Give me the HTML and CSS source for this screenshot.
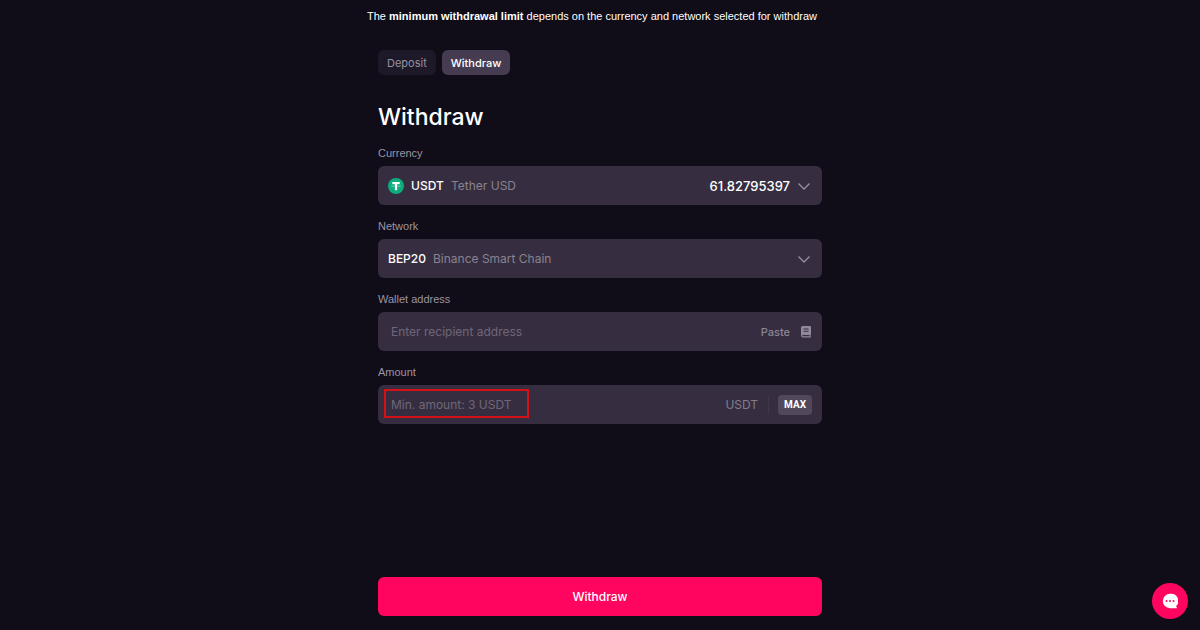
FILE: index.html
```html
<!DOCTYPE html>
<html lang="en">
<head>
  <meta charset="UTF-8" />
  <meta name="viewport" content="width=device-width, initial-scale=1.0"/>
  <title>Withdraw</title>
  <link rel="stylesheet" href="styles.css">
</head>
<body>
  <p class="note">The <strong>minimum withdrawal limit</strong> depends on the currency and network selected for withdraw</p>

  <main class="wallet">
    <div class="tabs">
      <button type="button" class="tab">Deposit</button>
      <button type="button" class="tab active">Withdraw</button>
    </div>

    <h1>Withdraw</h1>

    <form class="form">
      <label class="label" for="currency">Currency</label>
      <div class="field">
        <svg class="coin" viewBox="0 0 16 16" aria-hidden="true">
          <circle cx="8" cy="8" r="8" fill="#0cac7d"/>
          <path d="M4.300 4h7.400v2H9.100v6.300H6.900V6H4.300z" fill="#fff"/>
          <ellipse cx="8" cy="7.800" rx="4.600" ry="1" fill="none" stroke="#fff" stroke-width=".5" opacity=".6"/>
        </svg>
        <select id="currency" class="select">
          <option>USDT</option>
        </select>
        <span class="hint">Tether USD</span>
        <span class="balance">61.82795397</span>
        <svg class="chevron" viewBox="0 0 14 14" aria-hidden="true"><path d="M1.500 4.500 7 10l5.500-5.500"/></svg>
      </div>

      <label class="label" for="network">Network</label>
      <div class="field">
        <select id="network" class="select">
          <option>BEP20</option>
        </select>
        <span class="hint">Binance Smart Chain</span>
        <svg class="chevron last" viewBox="0 0 14 14" aria-hidden="true"><path d="M1.500 4.500 7 10l5.500-5.500"/></svg>
      </div>

      <label class="label" for="address">Wallet address</label>
      <div class="field">
        <input type="text" id="address" class="input" placeholder="Enter recipient address" />
        <button type="button" class="paste">Paste</button>
        <button type="button" class="book" aria-label="Address book">
          <svg viewBox="0 0 12 12" aria-hidden="true">
            <path fill-rule="evenodd" d="M2.500 0H10q1 0 1 1V8q0 .6-.4.9v1.300q.4.100.4.600t-.6.600H2.800Q1 11.400 1 9.600V1.500Q1 0 2.500 0zM3.500 2.500v1h5v-1zM3.500 4.700v1h5v-1zM2.900 9q-.7 0-.7.600t.7.600h6.500V9z"/>
          </svg>
        </button>
      </div>

      <label class="label" for="amount">Amount</label>
      <div class="field">
        <input type="text" id="amount" class="input" placeholder="Min. amount: 3 USDT" />
        <span class="unit">USDT</span>
        <button type="button" class="max">MAX</button>
        <span class="highlight"></span>
      </div>

      <button type="button" class="submit">Withdraw</button>
    </form>
  </main>

  <button type="button" class="chat" aria-label="Chat">
    <svg viewBox="0 0 16 16" aria-hidden="true">
      <path d="M8 .800a7.200 7.200 0 1 0 0 14.400h6.800q.6 0 .2-.5l-1-1.500A7.200 7.200 0 0 0 8 .800z" fill="#fff"/>
      <circle cx="4.500" cy="8" r="1" fill="#ff0560"/>
      <circle cx="8" cy="8" r="1" fill="#ff0560"/>
      <circle cx="11.500" cy="8" r="1" fill="#ff0560"/>
    </svg>
  </button>
</body>
</html>
```

FILE: styles.css
```css
* {
  box-sizing: border-box;
}
body {
  margin: 0;
  min-height: 100vh;
  display: flex;
  flex-direction: column;
  background: #100c18;
  color: #fff;
  font-family: Inter, "Liberation Sans", sans-serif;
  font-size: 12px;
}
button, input, select {
  font: inherit;
  color: inherit;
  border: 0;
  padding: 0;
  background: none;
}
button {
  cursor: pointer;
}
.note {
  margin: 0;
  padding: 8px 16px 0 0;
  font-family: "Liberation Sans", Arial, sans-serif;
  font-size: 11px;
  line-height: 16px;
  text-align: center;
}
.wallet {
  flex: 1;
  display: flex;
  flex-direction: column;
  width: 100%;
  max-width: 444px;
  margin: 0 auto;
  padding: 26px 0 14px;
}
.tabs {
  display: flex;
  gap: 6px;
}
.tab {
  height: 25px;
  padding: 0 9px;
  border-radius: 6px;
  background: #1e1928;
  color: #9791a1;
  font-size: 11px;
}
.tab.active {
  background: #463c52;
  color: #fff;
  font-weight: 500;
}
h1 {
  margin: 27px 0 14px;
  font-size: 23px;
  line-height: 30px;
  font-weight: 500;
}
.form {
  flex: 1;
  display: flex;
  flex-direction: column;
}
.label {
  margin-bottom: 5px;
  color: #9a95a3;
  font-family: "Liberation Sans", Arial, sans-serif;
  font-size: 11px;
  line-height: 15px;
}
.field {
  position: relative;
  display: flex;
  align-items: center;
  height: 39px;
  margin-bottom: 14px;
  padding: 0 10px;
  border-radius: 6px;
  background: #362e40;
}
.coin {
  width: 16px;
  height: 16px;
  margin-right: 7px;
}
.select {
  appearance: none;
  font-weight: 500;
}
.select option {
  background: #362e40;
}
.hint {
  margin-left: 7px;
  color: #89828f;
}
.balance {
  margin-left: auto;
  font-size: 13px;
  font-weight: 500;
}
.chevron {
  width: 14px;
  height: 14px;
  margin: 0 1px 0 7px;
  fill: none;
  stroke: #9891a0;
  stroke-width: 1.3;
}
.chevron.last {
  margin-left: auto;
}
.input {
  flex: 1;
  min-width: 0;
  height: 100%;
  padding-left: 3px;
  outline: 0;
}
.input::placeholder {
  color: #6f6779;
  opacity: 1;
}
.paste {
  color: #8c8594;
  font-size: 11px;
  font-weight: 500;
}
.book {
  width: 12px;
  height: 12px;
  margin-left: 10px;
  fill: #91899a;
}
.book svg, .chat svg {
  display: block;
  width: 100%;
}
.unit {
  padding-right: 10px;
  border-right: 1px solid #40384a;
  color: #837c8a;
  line-height: 18px;
}
.max {
  height: 20px;
  margin-left: 9px;
  padding: 0 6px;
  border-radius: 4px;
  background: #51485b;
  font-family: Roboto, "Liberation Sans", sans-serif;
  font-size: 10px;
  font-weight: 700;
}
/* red frame around the minimum amount */
.highlight {
  position: absolute;
  top: 4px;
  left: 6px;
  width: 145px;
  height: 29px;
  border: 2px solid #d51118;
  pointer-events: none;
}
.submit {
  height: 39px;
  margin-top: auto;
  border-radius: 6px;
  background: #ff055f;
  font-size: 12px;
  font-weight: 500;
}
.chat {
  position: fixed;
  right: 12px;
  bottom: 11px;
  width: 36px;
  height: 36px;
  padding: 10px;
  border-radius: 50%;
  background: #ff0560;
}
```
